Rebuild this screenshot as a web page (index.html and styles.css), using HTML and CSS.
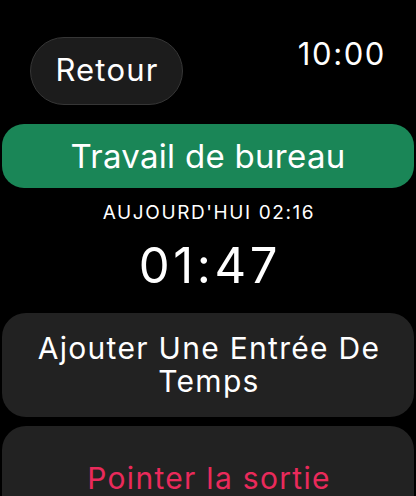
FILE: index.html
```html
<!DOCTYPE html>
<html lang="fr">
<head>
<meta charset="UTF-8">
<meta name="viewport" content="width=device-width, initial-scale=1.0">
<title>Minuteur</title>
<link rel="stylesheet" href="styles.css">
</head>
<body>
    <div class="screen">
        <div class="top-bar">
            <button class="back">Retour</button>
            <span class="clock">10:00</span>
        </div>

        <div class="project">Travail de bureau</div>

        <div class="started">AUJOURD'HUI 02:16</div>
        <div class="elapsed">01:47</div>

        <div class="actions">
            <button class="action">Ajouter Une Entrée De Temps</button>
            <button class="action action-stop">Pointer la sortie</button>
        </div>
    </div>
</body>
</html>
```

FILE: styles.css
```css
html, body {
    margin: 0;
    background: #000;
}
.screen {
    width: 416px;
    height: 496px;
    overflow: hidden;
    padding: 0 2px;
    box-sizing: border-box;
    font-family: Inter, "Noto Sans", sans-serif;
    color: #fff;
}
.top-bar {
    display: flex;
    justify-content: space-between;
    align-items: flex-start;
    padding: 37px 30px 0 28px;
}
.back {
    width: 153px;
    height: 68px;
    border-radius: 34px;
    background: #1c1c1c;
    border: 1.5px solid #363636;
    color: #fff;
    font-family: inherit;
    font-size: 31px;
    letter-spacing: 1.2px;
    padding: 0 0 4px 1px;
}
.clock {
    font-size: 31px;
    line-height: 1;
    letter-spacing: 1.6px;
    margin-top: 1px;
    margin-right: -2px;
}
.project {
    margin-top: 19px;
    height: 64px;
    border-radius: 22px;
    background: #1a8657;
    font-size: 33px;
    letter-spacing: 0.3px;
    display: flex;
    align-items: center;
    justify-content: center;
}
.started {
    margin-top: 12px;
    text-align: center;
    font-size: 19px;
    line-height: 26px;
    letter-spacing: 1.6px;
    padding-left: 2px;
}
.elapsed {
    margin-top: 12px;
    text-align: center;
    font-size: 49px;
    line-height: 56px;
    letter-spacing: 3.6px;
    padding-left: 4px;
}
.actions {
    margin-top: 19px;
    display: flex;
    flex-direction: column;
    gap: 9px;
}
.action {
    height: 104px;
    border: none;
    border-radius: 24px;
    background: #222;
    color: #fff;
    font-family: inherit;
    font-size: 30px;
    line-height: 33px;
    letter-spacing: 1.3px;
    padding: 0 26px 0 28px;
}
.action-stop {
    color: #ea2a5b;
}
```
